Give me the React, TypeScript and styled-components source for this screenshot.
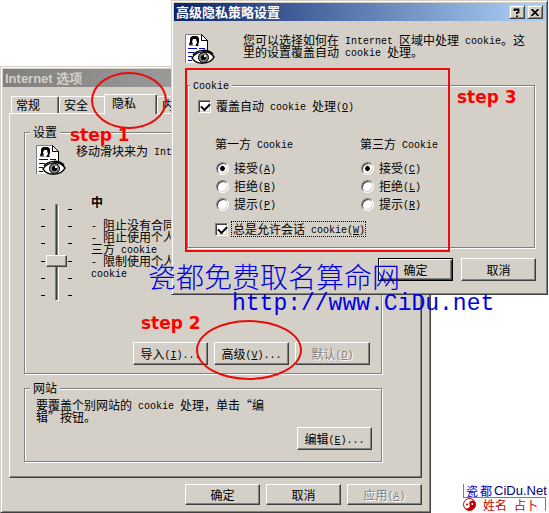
import React from "react";
import styled, { createGlobalStyle, css } from "styled-components";

const face = "#d4d0c8";
const shade = "#808080";
const dark = "#404040";

const GlobalStyle = createGlobalStyle`
  * { box-sizing: border-box; }
  body {
    margin: 0;
    background: #fff;
    color: #000;
    font: 12px/12px "Noto Sans CJK SC", sans-serif;
    overflow: hidden;
  }
  button, input { font: inherit; margin: 0; }
`;

const Desktop = styled.main`
  position: relative;
  display: flex;
  align-items: flex-end;
  padding-top: 66px;
`;

const raised = css`
  border: 1px solid;
  border-color: ${face} ${dark} ${dark} ${face};
  box-shadow: inset 1px 1px #fff, inset -1px -1px ${shade};
`;

const Window = styled.section`
  ${raised}
  padding: 2px;
  background: ${face};
`;

const BackWindow = styled(Window)`
  flex: 1;
`;

const FrontWindow = styled(Window)`
  position: absolute;
  top: 0;
  left: 171px;
  right: 1px;
`;

const TitleBar = styled.header<{ $active?: boolean }>`
  display: flex;
  align-items: center;
  gap: 2px;
  height: 18px;
  padding: 0 2px;
  color: ${(p) => (p.$active ? "#fff" : face)};
  background: ${(p) =>
    p.$active
      ? "linear-gradient(90deg, #0a246a, #a6caf0 94%)"
      : "linear-gradient(90deg, #808080, #c0c0c0)"};
`;

const Title = styled.h1`
  flex: 1;
  margin: 0;
  font-size: 13px;
  font-weight: 700;
  line-height: 18px;
`;

const Latin = styled.span`
  font-family: "Liberation Mono", monospace;
  font-size: 10px;
  line-height: 0;
  vertical-align: 1px;
  white-space: pre;
`;

const TitleLatin = styled.span`
  font-family: "Liberation Sans", sans-serif;
`;

const Button = styled.button<{ $short?: boolean; $primary?: boolean }>`
  width: 75px;
  height: ${(p) => (p.$short ? 21 : 23)}px;
  padding: 0;
  color: #000;
  background: ${face};
  border: 1px solid;
  border-color: ${(p) => (p.$primary ? "#000" : `#fff ${dark} ${dark} #fff`)};
  box-shadow: ${(p) =>
    p.$primary
      ? `inset 1px 1px #fff, inset -1px -1px ${dark}, inset -2px -2px ${shade}`
      : `inset -1px -1px ${shade}`};
  white-space: nowrap;
  &:disabled {
    color: ${shade};
    text-shadow: 1px 1px #fff;
  }
`;

const CaptionButton = styled.button`
  ${raised}
  display: grid;
  place-items: center;
  width: 16px;
  height: 14px;
  padding: 0;
  background: ${face};
`;

const Actions = styled.div`
  display: flex;
  justify-content: flex-end;
  gap: 6px;
`;

const DialogActions = styled(Actions)`
  gap: 8px;
  margin: 10px 9px 11px 0;
`;

const SheetActions = styled(Actions)`
  margin-top: 6px;
`;

const Sheet = styled.div`
  padding: 7px 6px 5px;
`;

const TabList = styled.div`
  display: flex;
  align-items: flex-end;
  padding-left: 2px;
  height: 19px;
`;

const Tab = styled.button<{ $selected?: boolean }>`
  width: ${(p) => (p.$selected ? 53 : 48)}px;
  height: ${(p) => (p.$selected ? 20 : 17)}px;
  margin: ${(p) => (p.$selected ? "0 0 -1px -3px" : "0")};
  padding: ${(p) => (p.$selected ? "0 8px 4px 7px" : "0 10px 0 4px")};
  text-align: left;
  color: #000;
  background: ${face};
  border: solid;
  border-width: 1px 1px 0;
  border-color: #fff ${dark} #fff #fff;
  border-radius: 2px 2px 0 0;
  box-shadow: inset -1px 0 ${shade};
  z-index: ${(p) => (p.$selected ? 1 : 0)};
  white-space: nowrap;
`;

const Panel = styled.div`
  padding: 12px 39px 15px 14px;
  border: 1px solid;
  border-color: #fff ${dark} ${dark} #fff;
  box-shadow: inset -1px -1px ${shade};
`;

const Group = styled.fieldset`
  min-width: 0;
  margin: 0;
  padding: 0 11px 8px 5px;
  border: 1px solid ${shade};
  box-shadow: 1px 1px #fff, inset 1px 1px #fff;
`;

const SiteGroup = styled(Group)`
  margin-top: 8px;
  padding: 0 9px 11px 5px;
`;

const CookieGroup = styled(Group)`
  margin: 14px 10px 0 13px;
  padding: 0 2px 9px;
`;

const Legend = styled.legend`
  padding: 0 3px;
  background: ${face};
`;

const IntroRow = styled.div`
  display: flex;
  gap: 9px;
  padding: 7px 0 0 6px;
  white-space: nowrap;
`;

const DialogIntro = styled(IntroRow)`
  gap: 27px;
  padding: 13px 8px 0 11px;
`;

const Note = styled.p`
  margin: 0;
`;

const LevelRow = styled.div`
  display: flex;
  gap: 19px;
  height: 126px;
  margin: 20px 0;
  padding-left: 11px;
`;

const SliderBox = styled.div`
  display: flex;
  padding-top: 8px;
`;

const Ticks = styled.div`
  display: flex;
  flex-direction: column;
  justify-content: space-between;
  width: 4px;
  height: 97px;
  padding: 5px 0;
`;

const Tick = styled.i`
  height: 1px;
  background: #000;
`;

const Slider = styled.input`
  appearance: none;
  writing-mode: vertical-lr;
  width: 23px;
  height: 97px;
  padding: 0;
  background: transparent;
  &::-webkit-slider-runnable-track {
    width: 4px;
    height: 97px;
    background: ${shade};
    border: 1px solid;
    border-color: ${shade} #fff #fff ${shade};
    box-shadow: inset 1px 0 ${dark};
  }
  &::-webkit-slider-thumb {
    appearance: none;
    width: 21px;
    height: 12px;
    margin-left: -10px;
    background: ${face};
    border: 1px solid;
    border-color: #fff ${dark} ${dark} #fff;
    box-shadow: inset -1px -1px ${shade};
  }
`;

const Level = styled.div`
  white-space: nowrap;
`;

const LevelName = styled.h2`
  margin: 0 0 11px;
  font-size: 12px;
  line-height: 12px;
`;

const SiteText = styled.p`
  margin: 5px 0 4px 6px;
`;

const Check = styled.label`
  display: flex;
  align-items: center;
  gap: 5px;
  height: 18px;
  white-space: nowrap;
`;

const Override = styled(Check)`
  margin: 6px 0 0 8px;
`;

const Session = styled(Check)`
  margin: 7px 0 0 25px;
`;

const Tickbox = styled.input`
  appearance: none;
  width: 13px;
  height: 13px;
  background: #fff;
  border: 1px solid;
  border-color: ${shade} #fff #fff ${shade};
  box-shadow: inset 1px 1px ${dark}, inset -1px -1px ${face};
  &:checked::after {
    content: "";
    display: block;
    width: 7px;
    height: 4px;
    margin: 2px 0 0 2px;
    border: solid #000;
    border-width: 0 0 2px 2px;
    transform: rotate(-45deg);
  }
`;

const Radio = styled(Tickbox)`
  border-radius: 50%;
  &:checked::after {
    width: 5px;
    height: 5px;
    margin: 3px;
    border: 0;
    border-radius: 50%;
    background: #000;
  }
`;

const Focused = styled.span`
  margin-left: -1px;
  padding: 1px 0 1px 1px;
  outline: 1px dotted #000;
`;

const Columns = styled.div`
  display: grid;
  grid-template-columns: 145px 1fr;
  margin: 23px 0 0 25px;
`;

const PartyName = styled.div`
  margin-bottom: 9px;
`;

const Choices = styled.div`
  padding-left: 1px;
`;

const Site = styled.aside`
  width: 118px;
  padding: 0 3px 2px 32px;
  white-space: nowrap;
`;

const SiteLine = styled.div`
  display: flex;
  align-items: center;
  gap: 2px;
  height: 14px;
  padding-left: 2px;
  border-left: 1px solid ${shade};
  border-bottom: 1px solid ${shade};
  color: #000080;
  font-size: 12px;
`;

const SiteMark = styled.span`
  color: #0000d0;
`;

const SiteName = styled.span`
  font: 13px/14px "Liberation Sans", sans-serif;
`;

const SiteSub = styled(SiteLine)`
  height: 13px;
  gap: 7px;
  padding-left: 0;
  border: 0;
  border-right: 1px solid ${shade};
  color: #d00000;
`;

const Step = styled.strong<{ $x: number; $y: number }>`
  position: absolute;
  left: ${(p) => p.$x}px;
  top: ${(p) => p.$y}px;
  color: #f00;
  font: 700 17px/20px "DejaVu Sans", sans-serif;
  white-space: nowrap;
`;

const Outline = styled.div<{ $x: number; $y: number; $w: number; $h: number; $round?: boolean }>`
  position: absolute;
  left: ${(p) => p.$x}px;
  top: ${(p) => p.$y}px;
  width: ${(p) => p.$w}px;
  height: ${(p) => p.$h}px;
  border: 2px solid #e80c0c;
  border-radius: ${(p) => (p.$round ? "50%" : "0")};
  pointer-events: none;
`;

const Watermark = styled.div`
  position: absolute;
  left: 148px;
  top: 262px;
  color: #0000e0;
  font: 300 28px/28px "Noto Sans CJK SC", sans-serif;
  white-space: nowrap;
`;

const WatermarkUrl = styled(Watermark)`
  left: 232px;
  top: 290px;
  font: 23px/28px "Liberation Mono", monospace;
`;

function Key({ k, after = "" }: { k: string; after?: string }) {
  return (
    <Latin>
      (<u>{k}</u>){after}
    </Latin>
  );
}

function PrivacyIcon() {
  return (
    <svg width="31" height="31" viewBox="0 0 31 31" aria-hidden="true">
      <path d="M0 0h16l7 7v22H0z" fill="#fff" />
      <path d="M16.500 0v6.500h6M16 0l6.500 6.500V20" fill="none" stroke="#000" />
      <path d="M.5 29V.5h16" fill="none" stroke="#808080" />
      <path d="M5 4l2-2h5l2 2v4l-1 3 1 1h-4l2-3-1-4H8L7 8l1 2-3 2-1-2 1-2z" fill="#000" />
      <path d="M4 12l3-2 2 2z" fill="#808080" />
      <path d="M3 14.500h9M14 14.500h6M3 18.500h6M3 22.500h4M3 26.500h4" stroke="#0000c0" />
      <path d="M7 24c4-7 17-9 22-1-4 8-18 8-22 1z" fill="#fff" stroke="#000" strokeWidth="1.500" />
      <path d="M8 21c5-6 15-6 20-1" fill="none" stroke="#000" strokeWidth="1.500" />
      <circle cx="18.500" cy="23.500" r="5" fill="#808080" stroke="#000" />
      <circle cx="18.500" cy="23.500" r="2.600" fill="#000" />
      <path d="M19 21h2v2h-2z" fill="#fff" />
    </svg>
  );
}

function YinYang() {
  return (
    <svg width="13" height="13" viewBox="0 0 13 13" aria-hidden="true">
      <circle cx="6.500" cy="6.500" r="6" fill="#fff" stroke="#c00000" />
      <path d="M.5 6.500a6 6 0 0 0 12 0a3 3 0 0 0-6 0a3 3 0 0 1-6 0z" fill="#c00000" transform="rotate(-20 6.500 6.500)" />
      <circle cx="9.300" cy="6" r="1" fill="#fff" />
      <circle cx="4" cy="6.500" r="1" fill="#c00000" />
    </svg>
  );
}

const parties = [
  { name: "第一方", id: "first", keys: ["A", "B", "P"] },
  { name: "第三方", id: "third", keys: ["C", "L", "R"] },
];
const choices = ["接受", "拒绝", "提示"];

function TickColumn() {
  return (
    <Ticks>
      {[0, 1, 2, 3, 4, 5].map((n) => (
        <Tick key={n} />
      ))}
    </Ticks>
  );
}

function OptionsWindow() {
  return (
    <BackWindow>
      <TitleBar>
        <Title>
          <TitleLatin>Internet </TitleLatin>选项
        </Title>
      </TitleBar>
      <Sheet>
        <TabList role="tablist">
          <Tab role="tab">常规</Tab>
          <Tab role="tab">安全</Tab>
          <Tab role="tab" $selected aria-selected>
            隐私
          </Tab>
          <Tab role="tab">内容</Tab>
        </TabList>
        <Panel role="tabpanel">
          <Group>
            <Legend>设置</Legend>
            <IntroRow>
              <PrivacyIcon />
              <Note>
                移动滑块来为<Latin> Internet</Latin>
              </Note>
            </IntroRow>
            <LevelRow>
              <SliderBox>
                <TickColumn />
                <Slider type="range" min={0} max={5} defaultValue={3} aria-label="设置" />
                <TickColumn />
              </SliderBox>
              <Level>
                <LevelName>中</LevelName>
                <Note><Latin>- </Latin>阻止没有合同</Note>
                <Note><Latin>- </Latin>阻止使用个人</Note>
                <Note>三方<Latin> cookie</Latin></Note>
                <Note><Latin>- </Latin>限制使用个人</Note>
                <Note><Latin>cookie</Latin></Note>
              </Level>
            </LevelRow>
            <Actions>
              <Button>导入<Key k="I" after="..." /></Button>
              <Button>高级<Key k="V" after="..." /></Button>
              <Button disabled>默认<Key k="D" /></Button>
            </Actions>
          </Group>
          <SiteGroup>
            <Legend>网站</Legend>
            <SiteText>
              要覆盖个别网站的<Latin> cookie </Latin>处理，单击“编
              <br />
              辑”按钮。
            </SiteText>
            <Actions>
              <Button>编辑<Key k="E" after="..." /></Button>
            </Actions>
          </SiteGroup>
        </Panel>
        <SheetActions>
          <Button $short>确定</Button>
          <Button $short>取消</Button>
          <Button $short disabled>应用<Key k="A" /></Button>
        </SheetActions>
      </Sheet>
    </BackWindow>
  );
}

function PrivacyDialog() {
  return (
    <FrontWindow role="dialog" aria-label="高级隐私策略设置">
      <TitleBar $active>
        <Title>高级隐私策略设置</Title>
        <CaptionButton aria-label="帮助">
          <svg width="8" height="9" viewBox="0 0 8 9">
            <path d="M1.500 3V1.500h4V4L4 5v1M4 7.500V9" fill="none" stroke="#000" strokeWidth="1.800" />
          </svg>
        </CaptionButton>
        <CaptionButton aria-label="关闭">
          <svg width="8" height="7" viewBox="0 0 8 7">
            <path d="M.5 0l7 7M7.500 0l-7 7" stroke="#000" strokeWidth="1.700" />
          </svg>
        </CaptionButton>
      </TitleBar>
      <DialogIntro>
        <PrivacyIcon />
        <Note>
          您可以选择如何在<Latin> Internet </Latin>区域中处理<Latin> cookie</Latin>。这
          <br />
          里的设置覆盖自动<Latin> cookie </Latin>处理。
        </Note>
      </DialogIntro>
      <CookieGroup>
        <Legend>
          <Latin>Cookie</Latin>
        </Legend>
        <Override>
          <Tickbox type="checkbox" defaultChecked />
          <span>
            覆盖自动<Latin> cookie </Latin>处理<Key k="O" />
          </span>
        </Override>
        <Columns>
          {parties.map((party) => (
            <div key={party.id} role="radiogroup" aria-label={party.name}>
              <PartyName>
                {party.name}
                <Latin> Cookie</Latin>
              </PartyName>
              <Choices>
                {choices.map((choice, i) => (
                  <Check key={choice}>
                    <Radio type="radio" name={party.id} defaultChecked={i === 0} />
                    <span>
                      {choice}
                      <Key k={party.keys[i]} />
                    </span>
                  </Check>
                ))}
              </Choices>
            </div>
          ))}
        </Columns>
        <Session>
          <Tickbox type="checkbox" defaultChecked />
          <Focused>
            总是允许会话<Latin> cookie</Latin>
            <Key k="W" />
          </Focused>
        </Session>
      </CookieGroup>
      <DialogActions>
        <Button $primary>确定</Button>
        <Button>取消</Button>
      </DialogActions>
    </FrontWindow>
  );
}

export default function App() {
  return (
    <>
      <GlobalStyle />
      <Desktop>
        <OptionsWindow />
        <Site>
          <SiteLine>
            <SiteMark>瓷</SiteMark>
            <SiteMark>都</SiteMark>
            <SiteName>CiDu.Net</SiteName>
          </SiteLine>
          <SiteSub>
            <YinYang />
            <span>姓名</span>
            <span>占卜</span>
          </SiteSub>
        </Site>
        <PrivacyDialog />
        <Outline $x={91} $y={72} $w={76} $h={57} $round />
        <Outline $x={196} $y={320} $w={106} $h={60} $round />
        <Outline $x={185} $y={68} $w={265} $h={184} />
        <Step $x={70} $y={125}>step 1</Step>
        <Step $x={141} $y={313}>step 2</Step>
        <Step $x={457} $y={87}>step 3</Step>
        <Watermark>瓷都免费取名算命网</Watermark>
        <WatermarkUrl>http://www.CiDu.net</WatermarkUrl>
      </Desktop>
    </>
  );
}
